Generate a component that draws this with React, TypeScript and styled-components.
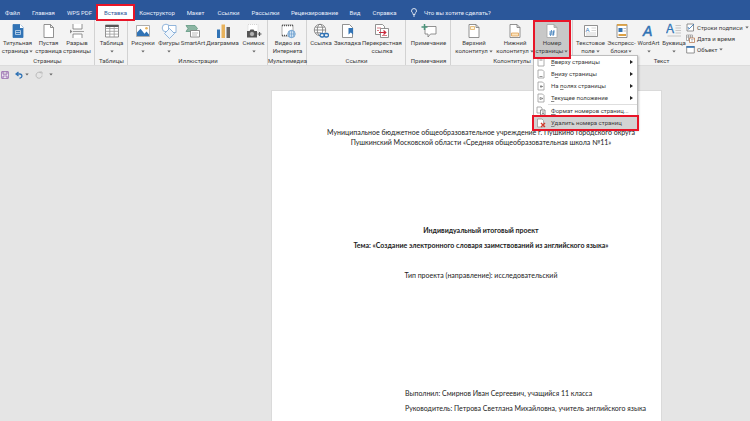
import React from "react";
import styled, { createGlobalStyle, css } from "styled-components";

const Global = createGlobalStyle`
  * { box-sizing: border-box; }
  body { margin: 0; background: #e5e5e5; }
  button { font: inherit; color: inherit; border: 0; background: none; padding: 0; margin: 0; }
`;

const Shell = styled.div`
  min-height: 100vh;
  display: flex;
  flex-direction: column;
  overflow: hidden;
  font: 6px/8px Roboto, "Noto Sans", sans-serif;
  color: #3b3b3b;
  background: #e5e5e5;
`;

const TabBar = styled.nav`
  display: flex;
  align-items: stretch;
  height: 20px;
  padding-top: 5px;
  color: #e8eefa;
  background: #2b579a;
`;

const Tab = styled.button<{ $w: number; $active?: boolean }>`
  flex: ${(p) => p.$w} 1 0;
  min-width: 0;
  display: flex;
  align-items: center;
  justify-content: center;
  white-space: nowrap;
  ${(p) =>
    p.$active &&
    css`
      position: relative;
      z-index: 2;
      color: #2b579a;
      background: #fff;
      outline: 2px solid #e81528;
      outline-offset: -1px;
    `}
`;

const Ask = styled.button`
  flex: 339 1 0;
  display: flex;
  align-items: center;
  gap: 7px;
  padding-left: 8px;
  white-space: nowrap;
`;

const Ribbon = styled.div`
  display: flex;
  height: 46px;
  background: #f3f3f3;
  border-bottom: 1px solid #dcdcdc;
`;

const Group = styled.section<{ $w: number }>`
  flex: ${(p) => p.$w} 1 0;
  min-width: 0;
  display: flex;
  flex-direction: column;
  justify-content: space-between;
  box-shadow: inset -1px 0 #d2d2d2;
  &:last-child { box-shadow: none; }
`;

const Tools = styled.div<{ $pad?: number }>`
  flex: none;
  display: flex;
  height: 37px;
  padding-right: ${(p) => p.$pad ?? 0}px;
`;

const GroupName = styled.div`
  display: flex;
  justify-content: center;
  white-space: nowrap;
`;

const Slot = styled.div<{ $w: number }>`
  position: relative;
  flex: ${(p) => p.$w} 1 0;
  min-width: 0;
  display: flex;
`;

const Tool = styled.button<{ $pressed?: boolean }>`
  flex: 1;
  min-width: 0;
  display: flex;
  flex-direction: column;
  align-items: center;
  padding-top: 3px;
  white-space: nowrap;
  ${(p) =>
    p.$pressed &&
    css`
      position: relative;
      z-index: 4;
      height: 39px;
      background: #c8c8c8;
      outline: 2px solid #e81528;
      outline-offset: -2px;
    `}
`;

const Line = styled.span`
  display: flex;
  align-items: center;
  gap: 1px;
  height: 8px;
`;

const Art = styled.svg`
  display: block;
  flex: none;
  fill: none;
  stroke: #777;
  stroke-width: 0.8;
  font-family: "Liberation Sans", sans-serif;
`;

const SideTools = styled.div<{ $w: number }>`
  flex: ${(p) => p.$w} 1 0;
  min-width: 0;
  display: flex;
  flex-direction: column;
  padding-top: 2px;
`;

const SideTool = styled.button`
  display: flex;
  align-items: center;
  gap: 2px;
  height: 11px;
  white-space: nowrap;
`;

const Menu = styled.div`
  position: absolute;
  z-index: 3;
  top: 35px;
  left: 0;
  width: 105px;
  background: #fff;
  border: 1px solid #bdbdbd;
  box-shadow: 1px 1px 2px #0003;
`;

const MenuItem = styled.button<{ $marked?: boolean }>`
  display: flex;
  align-items: center;
  gap: 5px;
  width: 100%;
  height: 12px;
  padding: 0 4px 0 2px;
  white-space: nowrap;
  u { text-underline-offset: 1px; text-decoration-thickness: 1px; text-decoration-color: #888; }
  ${(p) =>
    p.$marked &&
    css`
      background: #d3d3d3;
      outline: 2px solid #e81528;
    `}
`;

const ItemText = styled.span`
  flex: 1;
  text-align: left;
`;

const Rule = styled.hr`
  margin: 0 0 0 14px;
  border: 0;
  border-top: 1px solid #dedede;
`;

const QuickBar = styled.div`
  display: flex;
  align-items: center;
  height: 17px;
  padding-left: 1px;
  gap: 6px;
`;

const QuickButton = styled.button`
  display: flex;
  align-items: center;
  gap: 2px;
`;

const Canvas = styled.main`
  flex: 1;
  display: grid;
  grid-template-columns: 272fr 389fr 89fr;
  padding-top: 8px;
`;

const Sheet = styled.article`
  grid-column: 2;
  min-width: 0;
  padding: 36px 31px 8px 60px;
  background: #fff;
  outline: 1px solid #dadada;
  font: 7px/10px Lato, "Noto Sans", sans-serif;
  color: #222;
  white-space: nowrap;
`;

const Para = styled.p<{ $top?: number }>`
  display: flex;
  flex-direction: column;
  align-items: center;
  margin: ${(p) => p.$top ?? 0}px 0 0;
`;

const Title = styled(Para)`
  font-weight: 700;
`;

const Signatures = styled.div`
  display: grid;
  gap: 5px;
  margin-top: 108px;
  padding-left: 73px;
`;

const Caret = () => (
  <Art width="4" height="3" viewBox="0 0 4 3" aria-hidden>
    <path d="M.3.5h3.4L2 2.4z" fill="#666" stroke="none" />
  </Art>
);

const BLUE = "#3173b5";

const art: Record<string, React.ReactNode> = {
  cover: (
    <>
      <path d="M3 1.500h7l3 3v10H3z" fill={BLUE} stroke={BLUE} />
      <path d="M10 1v4h3.500z" fill="#fff" stroke="none" />
      <path d="M5.500 7.500h5v4h-5zM5.500 9.500h5" stroke="#c5daef" />
    </>
  ),
  blank: <path d="M3 1.500h6.500l3 3v10H3zM9.500 1.500v3h3" fill="#fff" />,
  pageBreak: (
    <>
      <path d="M4 1v5h9V1M4 15v-4h9v4" fill="#fff" />
      <path d="M4 8.500h11" stroke="#8a8a8a" />
      <path d="M1 6.500v4l2.500-2z" fill="#888" stroke="none" />
    </>
  ),
  table: (
    <>
      <path d="M1.500 2h13v12h-13z" fill="#fff" />
      <path d="M1.500 5.500h13M1.500 8.300h13M1.500 11.100h13M5.800 4v10M10.200 4v10" stroke="#999" />
      <path d="M1.500 3h13" stroke="#555" strokeWidth="2" />
    </>
  ),
  picture: (
    <>
      <path d="M1.500 2.500h13v11h-13z" fill="#fff" stroke="#999" />
      <path d="M2 13V9.500l3.500-3.700 4 5 2-2.300L14 11.500V13z" fill={BLUE} stroke="none" />
      <circle cx="11.500" cy="5.300" r="1.300" fill="#e9b45d" stroke="none" />
    </>
  ),
  shapes: (
    <>
      <circle cx="5" cy="5" r="3.800" fill="#fff" stroke="#78a5d3" />
      <path d="M7.500 2.500H15v7H7.500z" fill="#fff" stroke="#78a5d3" />
      <path d="M8.500 5.500l5 5-5 5-5-5z" fill="#eef5fc" stroke="#78a5d3" />
    </>
  ),
  smart: (
    <>
      <path d="M1 2.500h9l2.500 3-2.500 3H1l2-3z" fill="#8cb5a3" stroke="#619981" />
      <path d="M5.500 7.500h9v6.500h-9z" fill="#fff" />
      <path d="M7 10h6M7 12h5" stroke="#aaa" />
    </>
  ),
  chart: (
    <g stroke="none">
      <path d="M2 6.500h3V15H2z" fill={BLUE} />
      <path d="M6.500 1.500h3.500V15H6.500z" fill="#e8b35d" />
      <path d="M11.500 4H15v11h-3.500z" fill="#666" />
    </g>
  ),
  camera: (
    <>
      <path d="M2 1.500h10v8H2z" fill="#fff" stroke="#ccc" strokeDasharray="1 1" />
      <path d="M1 8h2.500l1-1.500h3L8.500 8H11v6.500H1z" fill="#555" stroke="none" />
      <circle cx="6" cy="11" r="2" fill="#fff" />
      <circle cx="6" cy="11" r=".8" fill="#555" stroke="none" />
      <path d="M11.500 11h4M13.500 9v4" stroke="#555" strokeWidth="1.200" />
    </>
  ),
  video: (
    <>
      <path d="M2 2h11v11H2z" fill="#fff" stroke="#999" />
      <path d="M2 2.500h11M2 12.500h6" stroke="#555" strokeWidth="1.500" strokeDasharray="1 1" />
      <circle cx="11.500" cy="11" r="3.700" fill="#d6e6f5" stroke="#5c93c7" />
      <path d="M7.800 11h7.400M11.500 7.300v7.400M9.800 8q-1 3 0 6M13.200 8q1 3 0 6" stroke="#5c93c7" strokeWidth=".6" />
    </>
  ),
  link: (
    <>
      <circle cx="7" cy="7" r="5.700" fill="#fff" />
      <ellipse cx="7" cy="7" rx="2.700" ry="5.700" />
      <path d="M1.300 7h11.400M2.300 4.200h9.400M2.300 9.800h6" />
      <path d="M7 10h9v5H7z" fill="#f3f3f3" stroke="none" />
      <rect x="7" y="10.500" width="4.500" height="3.500" rx="1.700" stroke={BLUE} strokeWidth="1.300" />
      <rect x="11" y="10.500" width="4.500" height="3.500" rx="1.700" stroke={BLUE} strokeWidth="1.300" />
    </>
  ),
  bookmark: (
    <>
      <path d="M2.500 1.500h7l3 3v10h-10z" fill="#fff" />
      <path d="M8.500 5v6.500l2.300-2 2.300 2V5z" fill={BLUE} stroke="none" />
    </>
  ),
  cross: (
    <>
      <path d="M1.500 1.500h7l2 2v8h-9z" fill="#fff" />
      <path d="M6.500 5.500h8v9h-8z" fill="#fff" />
      <path d="M3 5h4M3 7.500h2M8 12.500h5" stroke="#cf5964" />
      <path d="M5 9.500h6.500M9.500 7.500l2.300 2-2.300 2" stroke="#c9283b" strokeWidth="1.200" />
    </>
  ),
  comment: (
    <>
      <path d="M4 3.500h11v7.500H9.500L7 14v-3H4z" fill="#fff" />
      <path d="M.5 4h6M3.500 1v6" stroke="#4c947b" strokeWidth="1.500" />
    </>
  ),
  header: (
    <>
      <path d="M3 1.500h7l3 3v10H3zM10 1.500v3h3" fill="#fff" />
      <path d="M4.500 3.500h4v3h-4z" fill="#fff3da" stroke="#dfb066" />
    </>
  ),
  footer: (
    <>
      <path d="M3 1.500h7l3 3v10H3zM10 1.500v3h3" fill="#fff" />
      <path d="M4.500 10h7v3h-7z" fill="#fbe3bd" stroke="#dfa052" />
    </>
  ),
  number: (
    <>
      <path d="M3 1.500h7l3 3v10H3zM10 1.500v3h3" fill="#fff" stroke="#a4a4a4" />
      <path d="M7.500 7L6.500 13M10 7L9 13M5.300 9h5.500M5 11h5.500" stroke={BLUE} strokeWidth=".8" />
    </>
  ),
  textBox: (
    <>
      <path d="M1.500 2.500h13v11h-13z" fill="#fff" />
      <text x="2.500" y="8.500" fontSize="6" fill={BLUE} stroke="none">A</text>
      <path d="M8.500 5h4.500M8.500 7.500h4.500M3 10h10M3 12h10" stroke="#bbb" strokeWidth=".6" />
    </>
  ),
  parts: (
    <>
      <path d="M3 1.500h10v13H3z" fill="#fff" />
      <path d="M3 2h10" stroke="#dca145" strokeWidth="1.800" />
      <path d="M4.500 5h4v4h-4z" fill={BLUE} stroke="none" />
      <path d="M9.500 5.500h2.500M9.500 8h2.500" stroke="#aaa" />
      <path d="M4.500 12h7.500" stroke="#dca145" strokeWidth="2" />
    </>
  ),
  wordArt: <text x="2" y="13" fontSize="14" fontStyle="italic" fill={BLUE} stroke={BLUE} strokeWidth=".5">A</text>,
  dropCap: (
    <>
      <text x="0" y="10" fontSize="12" fill={BLUE} stroke={BLUE} strokeWidth=".3">A</text>
      <path d="M9.500 2.500H15M9.500 5H15M9.500 7.500H15M9.500 10H15M1.500 13H15" stroke="#aaa" strokeWidth=".6" />
    </>
  ),
};

type ToolDef = { w: number; icon: string; lines: string[]; drop?: boolean };

const groups: { w: number; name: string; tools: ToolDef[]; pad?: number }[] = [
  {
    w: 95, name: "Страницы", pad: 3, tools: [
      { w: 35, icon: "cover", lines: ["Титульная", "страница"], drop: true },
      { w: 27, icon: "blank", lines: ["Пустая", "страница"] },
      { w: 30, icon: "pageBreak", lines: ["Разрыв", "страницы"] },
    ],
  },
  { w: 33, name: "Таблицы", tools: [{ w: 33, icon: "table", lines: ["Таблица", ""], drop: true }] },
  {
    w: 140, name: "Иллюстрации", tools: [
      { w: 30, icon: "picture", lines: ["Рисунки", ""], drop: true },
      { w: 22, icon: "shapes", lines: ["Фигуры", ""], drop: true },
      { w: 26, icon: "smart", lines: ["SmartArt"] },
      { w: 33, icon: "chart", lines: ["Диаграмма"] },
      { w: 29, icon: "camera", lines: ["Снимок", ""], drop: true },
    ],
  },
  { w: 39, name: "Мультимедиа", tools: [{ w: 39, icon: "video", lines: ["Видео из", "Интернета"] }] },
  {
    w: 99, name: "Ссылки", pad: 2, tools: [
      { w: 28, icon: "link", lines: ["Ссылка"] },
      { w: 25, icon: "bookmark", lines: ["Закладка"] },
      { w: 44, icon: "cross", lines: ["Перекрестная", "ссылка"] },
    ],
  },
  { w: 45, name: "Примечания", tools: [{ w: 45, icon: "comment", lines: ["Примечание"] }] },
  {
    w: 122, name: "Колонтитулы", pad: 2, tools: [
      { w: 46, icon: "header", lines: ["Верхний", "колонтитул"], drop: true },
      { w: 36, icon: "footer", lines: ["Нижний", "колонтитул"], drop: true },
      { w: 38, icon: "number", lines: ["Номер", "страницы"], drop: true },
    ],
  },
  {
    w: 177, name: "Текст", tools: [
      { w: 35, icon: "textBox", lines: ["Текстовое", "поле"], drop: true },
      { w: 27, icon: "parts", lines: ["Экспресс-", "блоки"], drop: true },
      { w: 27, icon: "wordArt", lines: ["WordArt", ""], drop: true },
      { w: 24, icon: "dropCap", lines: ["Буквица", ""], drop: true },
    ],
  },
];

const tabs: [string, number][] = [
  ["Файл", 25], ["Главная", 37], ["WPS PDF", 35], ["Вставка", 37], ["Конструктор", 46],
  ["Макет", 31], ["Ссылки", 35], ["Рассылки", 39], ["Рецензирование", 59], ["Вид", 22], ["Справка", 37],
];

const pageMarks = ["M3.500 3h3", "M3.500 7.500h3", "M5 4v3M4 5.500h3", "M4 4.500l3 1-3 1z"];
const menuRows: [string, string, string][] = [
  ["", "В", "верху страницы"],
  ["В", "н", "изу страницы"],
  ["На ", "п", "олях страницы"],
  ["", "Т", "екущее положение"],
];

function PageGlyph({ mark }: { mark: string }) {
  return (
    <Art width="10" height="10" viewBox="0 0 10 10" aria-hidden>
      <path d="M2 1h4.500L8 2.500V9H2z" fill="#fff" stroke="#999" />
      <path d={mark} stroke="#777" />
    </Art>
  );
}

function NumberMenu() {
  return (
    <Menu role="menu">
      {menuRows.map(([before, key, rest], i) => (
        <MenuItem key={i} role="menuitem">
          <PageGlyph mark={pageMarks[i]} />
          <ItemText>
            {before}
            <u>{key}</u>
            {rest}
          </ItemText>
          <Art width="3" height="4" viewBox="0 0 3 4" aria-hidden>
            <path d="M0 0l3 2-3 2z" fill="#222" stroke="none" />
          </Art>
        </MenuItem>
      ))}
      <Rule />
      <MenuItem role="menuitem">
        <Art width="10" height="10" viewBox="0 0 10 10" aria-hidden>
          <path d="M1 1h4l1 1v5H1z" fill="#fff" stroke="#999" />
          <path d="M4.500 4h4.500v5H4.500zM6 6h2M6 7.500h2" fill="#fff" />
        </Art>
        <ItemText><u>Ф</u>ормат номеров страниц...</ItemText>
      </MenuItem>
      <MenuItem role="menuitem" $marked>
        <Art width="10" height="10" viewBox="0 0 10 10" aria-hidden>
          <path d="M1.500 1H6l1.500 1.500V9h-6z" fill="#fff" stroke="#999" />
          <path d="M5 5l4 4M9 5L5 9" stroke="#d33a2c" strokeWidth="1.300" />
        </Art>
        <ItemText><u>У</u>далить номера страниц</ItemText>
      </MenuItem>
    </Menu>
  );
}

export default function App() {
  return (
    <Shell>
      <Global />
      <TabBar>
        {tabs.map(([name, w]) => (
          <Tab key={name} $w={w} $active={name === "Вставка"}>{name}</Tab>
        ))}
        <Ask>
          <Art width="6" height="9" viewBox="0 0 6 9" aria-hidden>
            <path d="M2 6.500V5.300Q.5 4.300.5 3a2.500 2.500 0 0 1 5 0Q5.500 4.300 4 5.300v1.200zM2 8h2" stroke="#fff" />
          </Art>
          Что вы хотите сделать?
        </Ask>
      </TabBar>
      <Ribbon>
        {groups.map((g) => (
          <Group key={g.name} $w={g.w}>
            <Tools $pad={g.pad}>
              {g.tools.map((t) => (
                <Slot key={t.icon} $w={t.w}>
                  <Tool $pressed={t.icon === "number"}>
                    <Art width="16" height="16" viewBox="0 0 16 16" aria-hidden>{art[t.icon]}</Art>
                    {t.lines.map((l, i) => (
                      <Line key={i}>
                        {l}
                        {t.drop && i === t.lines.length - 1 && <Caret />}
                      </Line>
                    ))}
                  </Tool>
                  {t.icon === "number" && <NumberMenu />}
                </Slot>
              ))}
              {g.name === "Текст" && (
                <SideTools $w={64}>
                  <SideTool>
                    <Art width="9" height="9" viewBox="0 0 9 9" aria-hidden>
                      <path d="M1 1h6.500v7H1z" fill="#fff" />
                      <path d="M2.500 6.500L8 1M2 4l1 2" stroke={BLUE} />
                    </Art>
                    Строки подписи <Caret />
                  </SideTool>
                  <SideTool>
                    <Art width="9" height="9" viewBox="0 0 9 9" aria-hidden>
                      <path d="M.5 1h6v5.500h-6zM.5 3h6M2.500 1v5M4.500 1v5" fill="#fff" stroke="#999" />
                      <path d="M3.500 4h5v4.500h-5z" fill="#fff" stroke="#b87c55" />
                      <path d="M5 5.500h2.500M5 7h2" stroke="#999" strokeWidth=".6" />
                    </Art>
                    Дата и время
                  </SideTool>
                  <SideTool>
                    <Art width="9" height="9" viewBox="0 0 9 9" aria-hidden>
                      <path d="M.7 1.500h7.600v6.500H.7z" fill="#fff" />
                      <path d="M.4 2h8.200" stroke={BLUE} strokeWidth="1.600" />
                    </Art>
                    Объект <Caret />
                  </SideTool>
                </SideTools>
              )}
            </Tools>
            <GroupName>{g.name}</GroupName>
          </Group>
        ))}
      </Ribbon>
      <QuickBar>
        <QuickButton aria-label="Сохранить">
          <Art width="8" height="8" viewBox="0 0 8 8" aria-hidden>
            <path d="M.7.7h6.600v6.600H.7zM2 .7v2.500h4V.7M2 7.300V5h4v2.300" fill="#fff" stroke="#8752a1" />
          </Art>
        </QuickButton>
        <QuickButton aria-label="Отменить">
          <Art width="8" height="8" viewBox="0 0 8 8" aria-hidden>
            <path d="M3.500 1L1 3l2.500 2M1.300 3H5q2 .3 2 2T4.500 7.300" stroke={BLUE} strokeWidth="1.300" />
          </Art>
          <Caret />
        </QuickButton>
        <QuickButton aria-label="Повторить">
          <Art width="8" height="8" viewBox="0 0 8 8" aria-hidden>
            <path d="M6 2a3 3 0 1 0 1 2.500M4.500 1H7v2.500" stroke="#b0b0b0" />
          </Art>
        </QuickButton>
        <QuickButton aria-label="Настроить панель"><Caret /></QuickButton>
      </QuickBar>
      <Canvas>
        <Sheet>
          <Para>
            <span>Муниципальное бюджетное общеобразовательное учреждение г. Пушкино Городского округа</span>
            <span>Пушкинский Московской области «Средняя общеобразовательная школа №11»</span>
          </Para>
          <Title $top={78}>Индивидуальный итоговый проект</Title>
          <Title $top={5}>Тема: «Создание электронного словаря заимствований из английского языка»</Title>
          <Para $top={20}>Тип проекта (направление): исследовательский</Para>
          <Signatures>
            <span>Выполнил: Смирнов Иван Сергеевич, учащийся 11 класса</span>
            <span>Руководитель: Петрова Светлана Михайловна, учитель английского языка</span>
          </Signatures>
        </Sheet>
      </Canvas>
    </Shell>
  );
}
